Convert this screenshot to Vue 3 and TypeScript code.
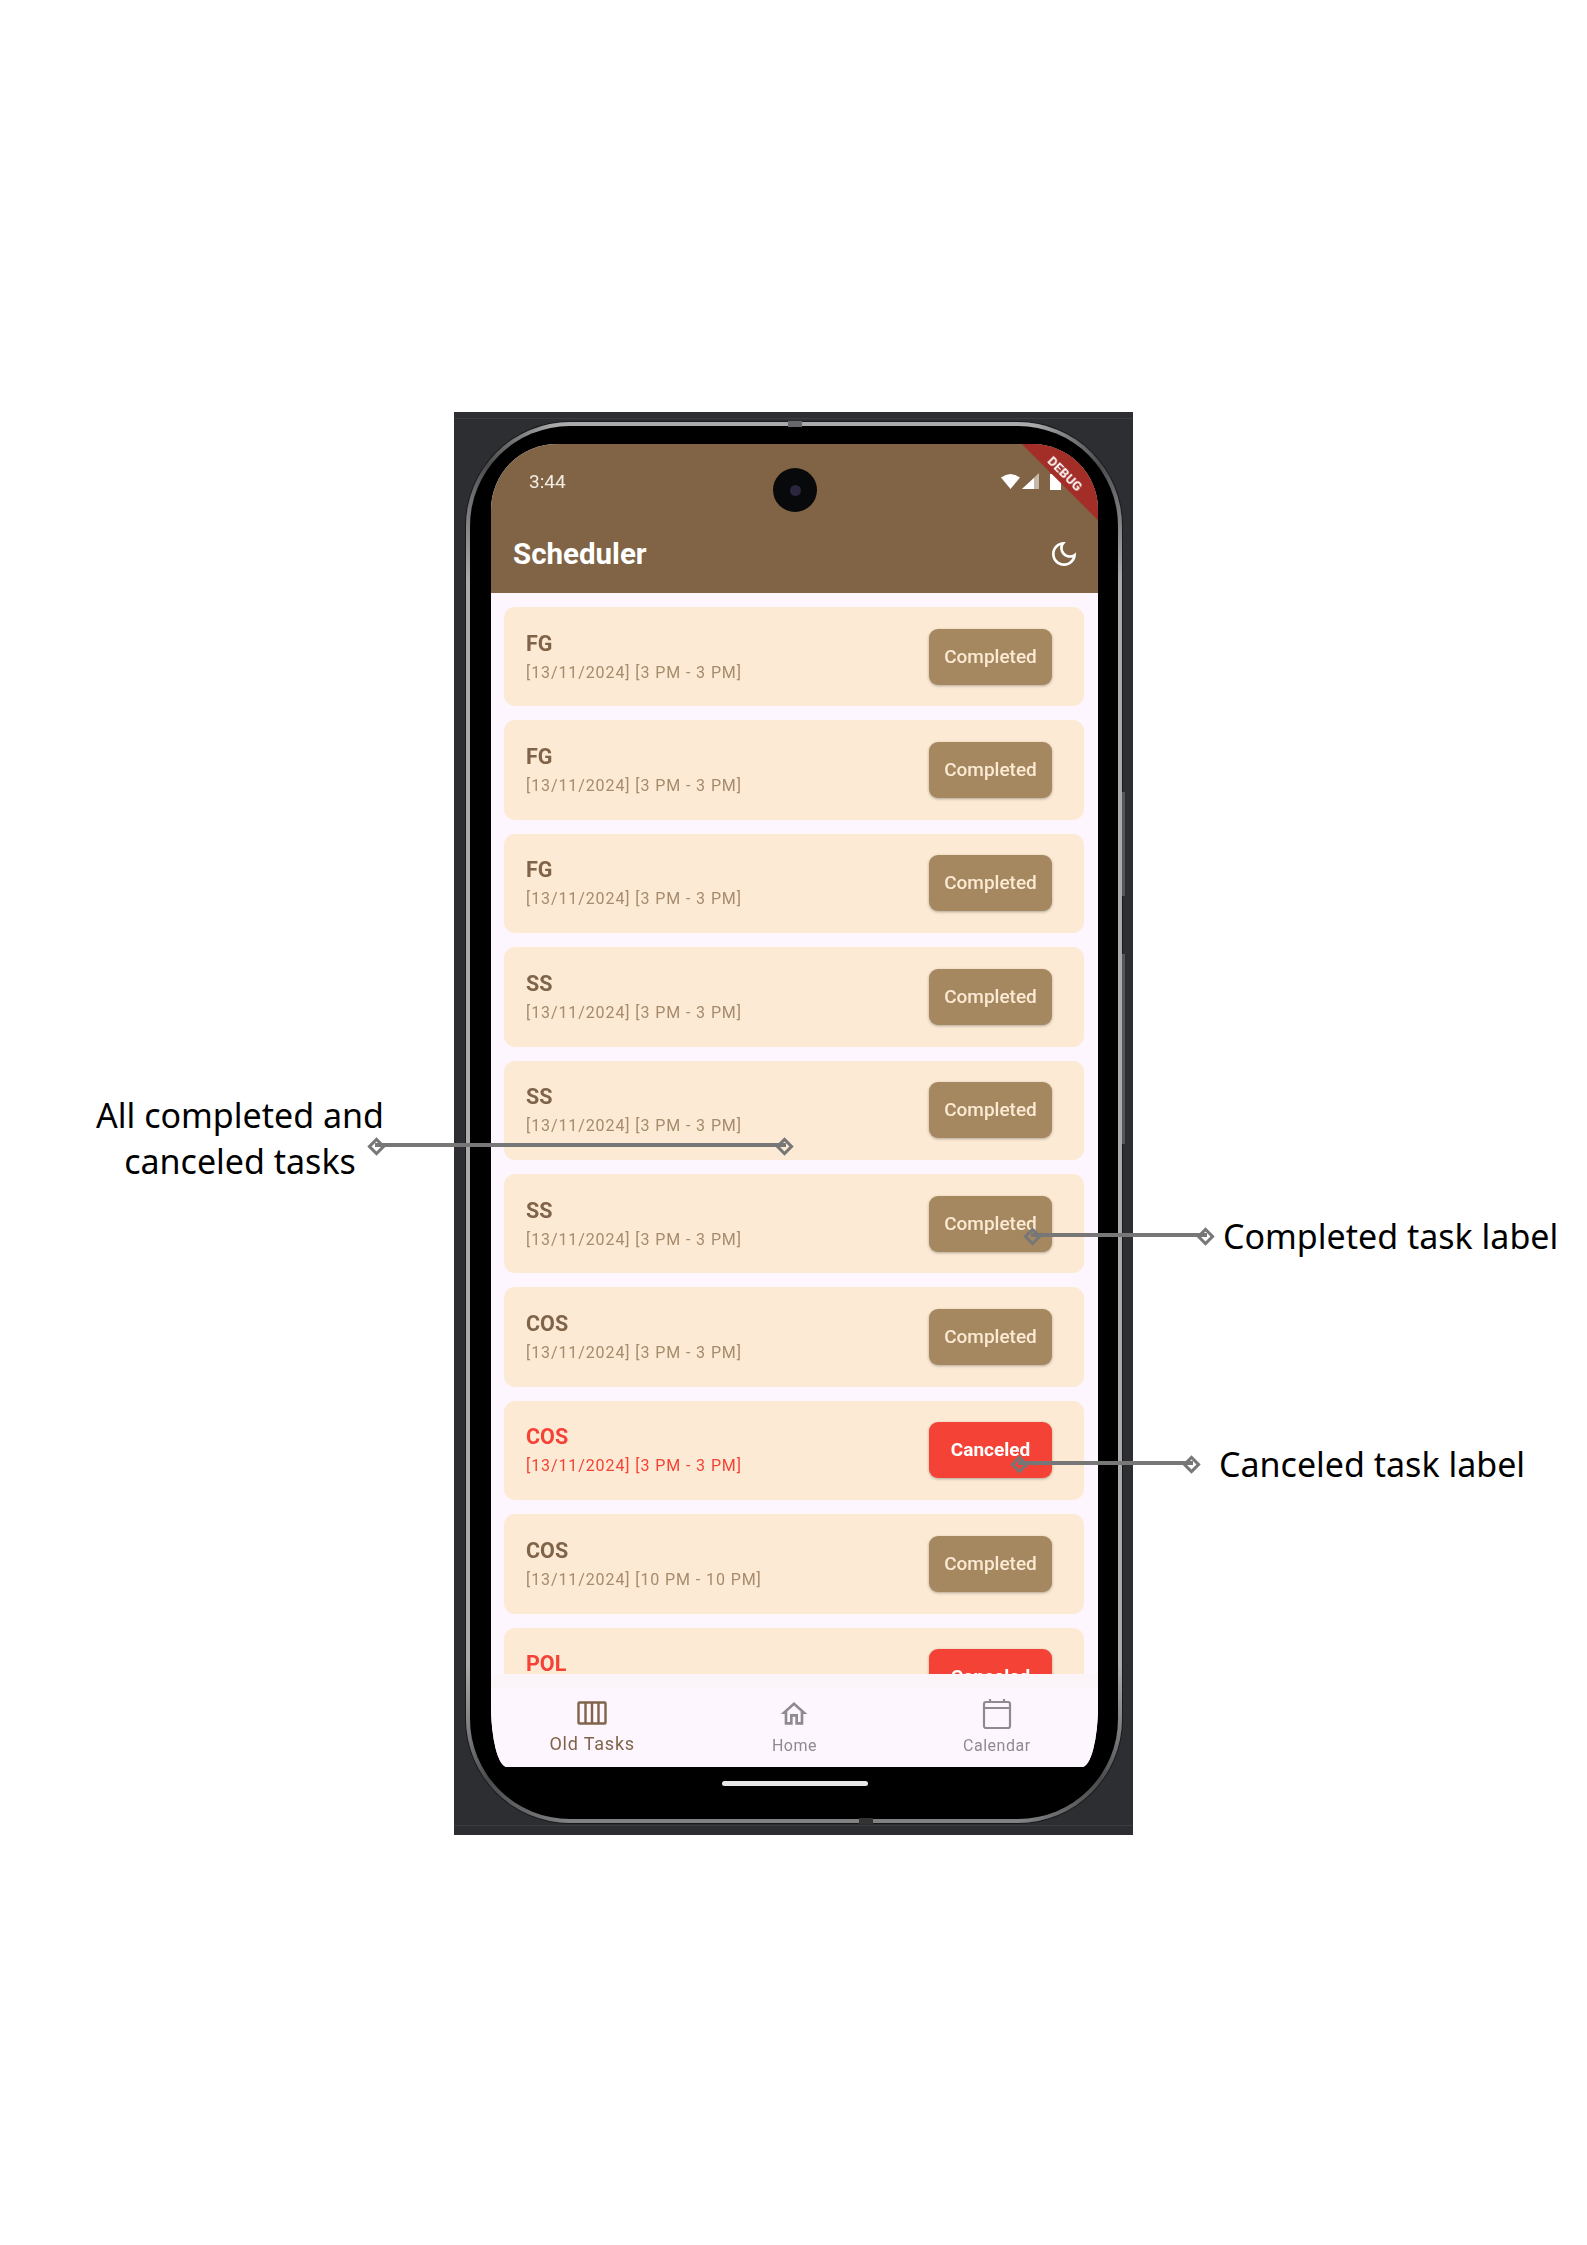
<template>
  <div class="page">
    <div class="backdrop">
      <div class="phone">
        <span class="notch-mark top"></span>
        <span class="notch-mark bottom"></span>
        <span class="side-key volume"></span>
        <span class="side-key power"></span>
        <div class="screen">
          <div class="debug-ribbon">DEBUG</div>
          <header class="app-header">
            <div class="status-bar">
              <span class="clock">3:44</span>
              <span class="camera"><i></i></span>
              <div class="status-icons">
                <svg width="19" height="16" viewBox="0 0 19 16"><path d="M0 4.5Q9.5-2.5 19 4.5L9.5 16z" fill="#fff" /></svg>
                <svg width="17" height="16" viewBox="0 0 17 16"><path d="M17 0V16H0z" fill="#fff" opacity=".55" /><path d="M12 5V16H0L12 5z" fill="#fff" /></svg>
                <svg class="battery" width="11" height="18" viewBox="0 0 11 18"><path d="M3 2V0h5v2h3v16H0V2z" fill="#fff" /></svg>
              </div>
            </div>
            <div class="app-bar">
              <h1 class="app-title">Scheduler</h1>
              <svg width="32" height="32" viewBox="0 0 24 24" fill="#fff">
                <path d="M9.37 5.51c-.18.64-.27 1.31-.27 1.99 0 4.08 3.32 7.4 7.4 7.4.68 0 1.35-.09 1.99-.27C17.45 17.19 14.93 19 12 19c-3.86 0-7-3.14-7-7 0-2.93 1.81-5.45 4.37-6.49zM12 3c-4.97 0-9 4.03-9 9s4.03 9 9 9 9-4.03 9-9c0-.46-.04-.92-.1-1.36-.98 1.37-2.58 2.26-4.4 2.26-2.98 0-5.4-2.42-5.4-5.4 0-1.81.89-3.42 2.26-4.4-.44-.06-.9-.1-1.36-.1z" />
              </svg>
            </div>
          </header>

          <div class="task-list">
            <div v-for="(task, i) in tasks" :key="i" class="task-card" :class="{ canceled: task.canceled }">
              <div class="task-info">
                <p class="task-name">{{ task.name }}</p>
                <p class="task-date">{{ task.date }}</p>
              </div>
              <span class="task-label">{{ task.canceled ? 'Canceled' : 'Completed' }}</span>
            </div>
          </div>

          <div class="list-gap"></div>
          <nav class="bottom-nav">
            <div class="nav-item active">
              <svg width="30" height="24" viewBox="0 0 30 24" fill="none" stroke="#80644a" stroke-width="2.4">
                <rect x="1.5" y="1.5" width="27" height="21" rx="1" />
                <path d="M8.5 2v20M15 2v20M21.5 2v20" />
              </svg>
              <span>Old Tasks</span>
            </div>
            <div class="nav-item">
              <svg width="32" height="32" viewBox="0 0 24 24" fill="#8f8a90">
                <path d="M12 5.69l5 4.5V18h-2v-6H9v6H7v-7.81l5-4.5M12 3L2 12h3v8h6v-6h2v6h6v-8h3L12 3z" />
              </svg>
              <span>Home</span>
            </div>
            <div class="nav-item">
              <svg width="30" height="32" viewBox="0 0 30 32" fill="none" stroke="#8f8a90" stroke-width="2.2">
                <rect x="2" y="4" width="26" height="26" rx="2" />
                <path d="M2 10h26M8 1v3M22 1v3" />
              </svg>
              <span>Calendar</span>
            </div>
          </nav>
        </div>
        <div class="chin"><span class="home-indicator"></span></div>
      </div>
    </div>

    <!-- Callouts over the phone -->
    <div class="callout-text all">All completed and<br />canceled tasks</div>
    <div class="callout-line all"><i></i><i></i></div>
    <div class="callout-text done">Completed task label</div>
    <div class="callout-line done"><i></i><i></i></div>
    <div class="callout-text cancel">Canceled task label</div>
    <div class="callout-line cancel"><i></i><i></i></div>
  </div>
</template>

<script setup lang="ts">
interface Task {
  name: string
  date: string
  canceled?: boolean
}

const tasks: Task[] = [
  { name: 'FG', date: '[13/11/2024] [3 PM - 3 PM]' },
  { name: 'FG', date: '[13/11/2024] [3 PM - 3 PM]' },
  { name: 'FG', date: '[13/11/2024] [3 PM - 3 PM]' },
  { name: 'SS', date: '[13/11/2024] [3 PM - 3 PM]' },
  { name: 'SS', date: '[13/11/2024] [3 PM - 3 PM]' },
  { name: 'SS', date: '[13/11/2024] [3 PM - 3 PM]' },
  { name: 'COS', date: '[13/11/2024] [3 PM - 3 PM]' },
  { name: 'COS', date: '[13/11/2024] [3 PM - 3 PM]', canceled: true },
  { name: 'COS', date: '[13/11/2024] [10 PM - 10 PM]' },
  { name: 'POL', date: '[13/11/2024] [3 PM - 3 PM]', canceled: true }
]
</script>

<style>
html, body { background: #fff; }
</style>

<style scoped>
.page {
  position: relative;
  height: 2245px;
  padding-top: 412px;
  box-sizing: border-box;
  background: #fff;
  overflow: hidden;
  font-family: Roboto, "Liberation Sans", sans-serif;
}

.backdrop {
  width: 679px;
  height: 1423px;
  margin-left: 454px;
  padding: 10px 11px 0 12px;
  box-sizing: border-box;
  background:
    linear-gradient(#3b3c40, #3b3c40) 0 6px / 100% 1px no-repeat,
    linear-gradient(#3b3c40, #3b3c40) 0 1413px / 100% 1px no-repeat,
    #2d2e32;
}

.phone {
  position: relative;
  height: 1401px;
  padding: 18px 20px 0 21px;
  box-sizing: border-box;
  border: 4px solid transparent;
  border-radius: 104px;
  background:
    linear-gradient(#000, #000) padding-box,
    conic-gradient(
      #a9aaac 0deg 19deg, #4a4b4d 25deg, #a9aaac 31deg 149deg, #4a4b4d 155deg,
      #808183 162deg 198deg, #4a4b4d 205deg, #a9aaac 211deg 329deg, #4a4b4d 335deg, #a9aaac 341deg
    ) border-box;
  box-shadow: 0 0 0 1px #1a1a1c;
}

.notch-mark {
  position: absolute;
  width: 14px;
  height: 6px;
  background: #66676a;
}
.notch-mark.top { top: -5px; left: 318px; }
.notch-mark.bottom { bottom: -5px; left: 389px; background: #333; }

.side-key {
  position: absolute;
  right: -7px;
  width: 3px;
  background: #55565a;
}
.side-key.volume { top: 366px; height: 104px; }
.side-key.power { top: 528px; height: 190px; }

.screen {
  position: relative;
  display: flex;
  flex-direction: column;
  height: 1323px;
  overflow: hidden;
  background: #fdf6fe;
  border-radius: 66px 66px 16px 16px / 66px 66px 62px 62px;
  filter: blur(0.5px);
}

.debug-ribbon {
  position: absolute;
  top: 11px;
  right: -56px;
  width: 170px;
  height: 30px;
  line-height: 41px;
  text-align: center;
  transform: rotate(45deg);
  background: #a32d27;
  color: #fff;
  font-size: 13px;
  font-weight: 700;
  letter-spacing: 0.3px;
  z-index: 2;
}

.app-header {
  height: 149px;
  flex: none;
  background: #806445;
  color: #fff;
}

.status-bar {
  position: relative;
  display: flex;
  justify-content: space-between;
  align-items: center;
  height: 74px;
  padding: 0 37px 0 38px;
}

.clock {
  font-size: 19px;
  color: #f3ece2;
}

.camera {
  position: absolute;
  left: 282px;
  top: 24px;
  width: 44px;
  height: 44px;
  display: flex;
  align-items: center;
  justify-content: center;
  border-radius: 50%;
  background: #08090b;
}
.camera i {
  width: 11px;
  height: 11px;
  border-radius: 50%;
  background: #2b2540;
}

.status-icons {
  display: flex;
  align-items: center;
  gap: 2px;
}
.battery { margin-left: 9px; }

.app-bar {
  display: flex;
  justify-content: space-between;
  align-items: center;
  padding: 0 18px 0 22px;
  height: 72px;
}

.app-title {
  margin: 0;
  font-size: 29.5px;
  font-weight: 700;
}

.task-list {
  flex: 1;
  min-height: 0;
  overflow: hidden;
  display: flex;
  flex-direction: column;
  gap: 14px;
  padding: 14px 14px 0 13px;
}

.task-card {
  flex: none;
  height: 99.4px;
  display: flex;
  align-items: center;
  justify-content: space-between;
  padding: 0 32px 0 22px;
  background: #fcead4;
  border-radius: 11px;
  color: #80644a;
}

.task-name {
  margin: 0 0 7px;
  font-size: 21.5px;
  font-weight: 700;
  line-height: 24px;
}

.task-date {
  margin: 0;
  font-size: 16px;
  line-height: 19px;
  letter-spacing: 0.9px;
  color: #a68b6c;
}

.task-label {
  width: 123px;
  height: 56px;
  line-height: 55px;
  text-align: center;
  border-radius: 9px;
  background: #a58860;
  color: #fcead4;
  font-size: 19px;
  font-weight: 500;
  box-shadow: 0 1px 3px rgba(0, 0, 0, 0.3);
}

.task-card.canceled .task-name,
.task-card.canceled .task-date { color: #f44336; }
.task-card.canceled .task-label {
  background: #f44336;
  color: #fff;
  font-weight: 700;
}

.list-gap {
  flex: none;
  height: 14px;
  background: #fbf5f9;
}

.bottom-nav {
  flex: none;
  height: 79px;
  display: grid;
  grid-template-columns: repeat(3, 1fr);
  background: #fdf6fe;
}

.nav-item {
  display: flex;
  flex-direction: column;
  align-items: center;
  justify-content: flex-start;
  gap: 6px;
  padding-top: 10px;
  color: #8f8a90;
  font-size: 16px;
  letter-spacing: 0.5px;
}

.nav-item.active {
  gap: 8px;
  padding-top: 13px;
  color: #80644a;
  font-size: 18px;
  letter-spacing: 0.8px;
}

.chin {
  height: 52px;
  padding-bottom: 20px;
  box-sizing: border-box;
  display: flex;
  align-items: center;
  justify-content: center;
}

.home-indicator {
  width: 146px;
  height: 5px;
  border-radius: 3px;
  background: #e8e8e8;
}

.callout-text {
  position: absolute;
  font-family: "Noto Sans", "Open Sans", sans-serif;
  font-size: 34px;
  line-height: 46px;
  color: #000;
  white-space: nowrap;
}
.callout-text.all { left: 80px; top: 1092px; width: 320px; text-align: center; }
.callout-text.done { left: 1223px; top: 1213px; }
.callout-text.cancel { left: 1219px; top: 1441px; }

.callout-line {
  position: absolute;
  height: 4px;
  background: #777;
}
.callout-line.all { left: 375px; top: 1143px; width: 411px; }
.callout-line.done { left: 1031px; top: 1233px; width: 176px; }
.callout-line.cancel { left: 1018px; top: 1461px; width: 175px; }

.callout-line i {
  position: absolute;
  top: -3px;
  width: 7px;
  height: 7px;
  border: 3px solid #777;
  transform: rotate(45deg);
}
.callout-line i:first-child { left: -5px; }
.callout-line i:last-child { right: -5px; }
</style>
